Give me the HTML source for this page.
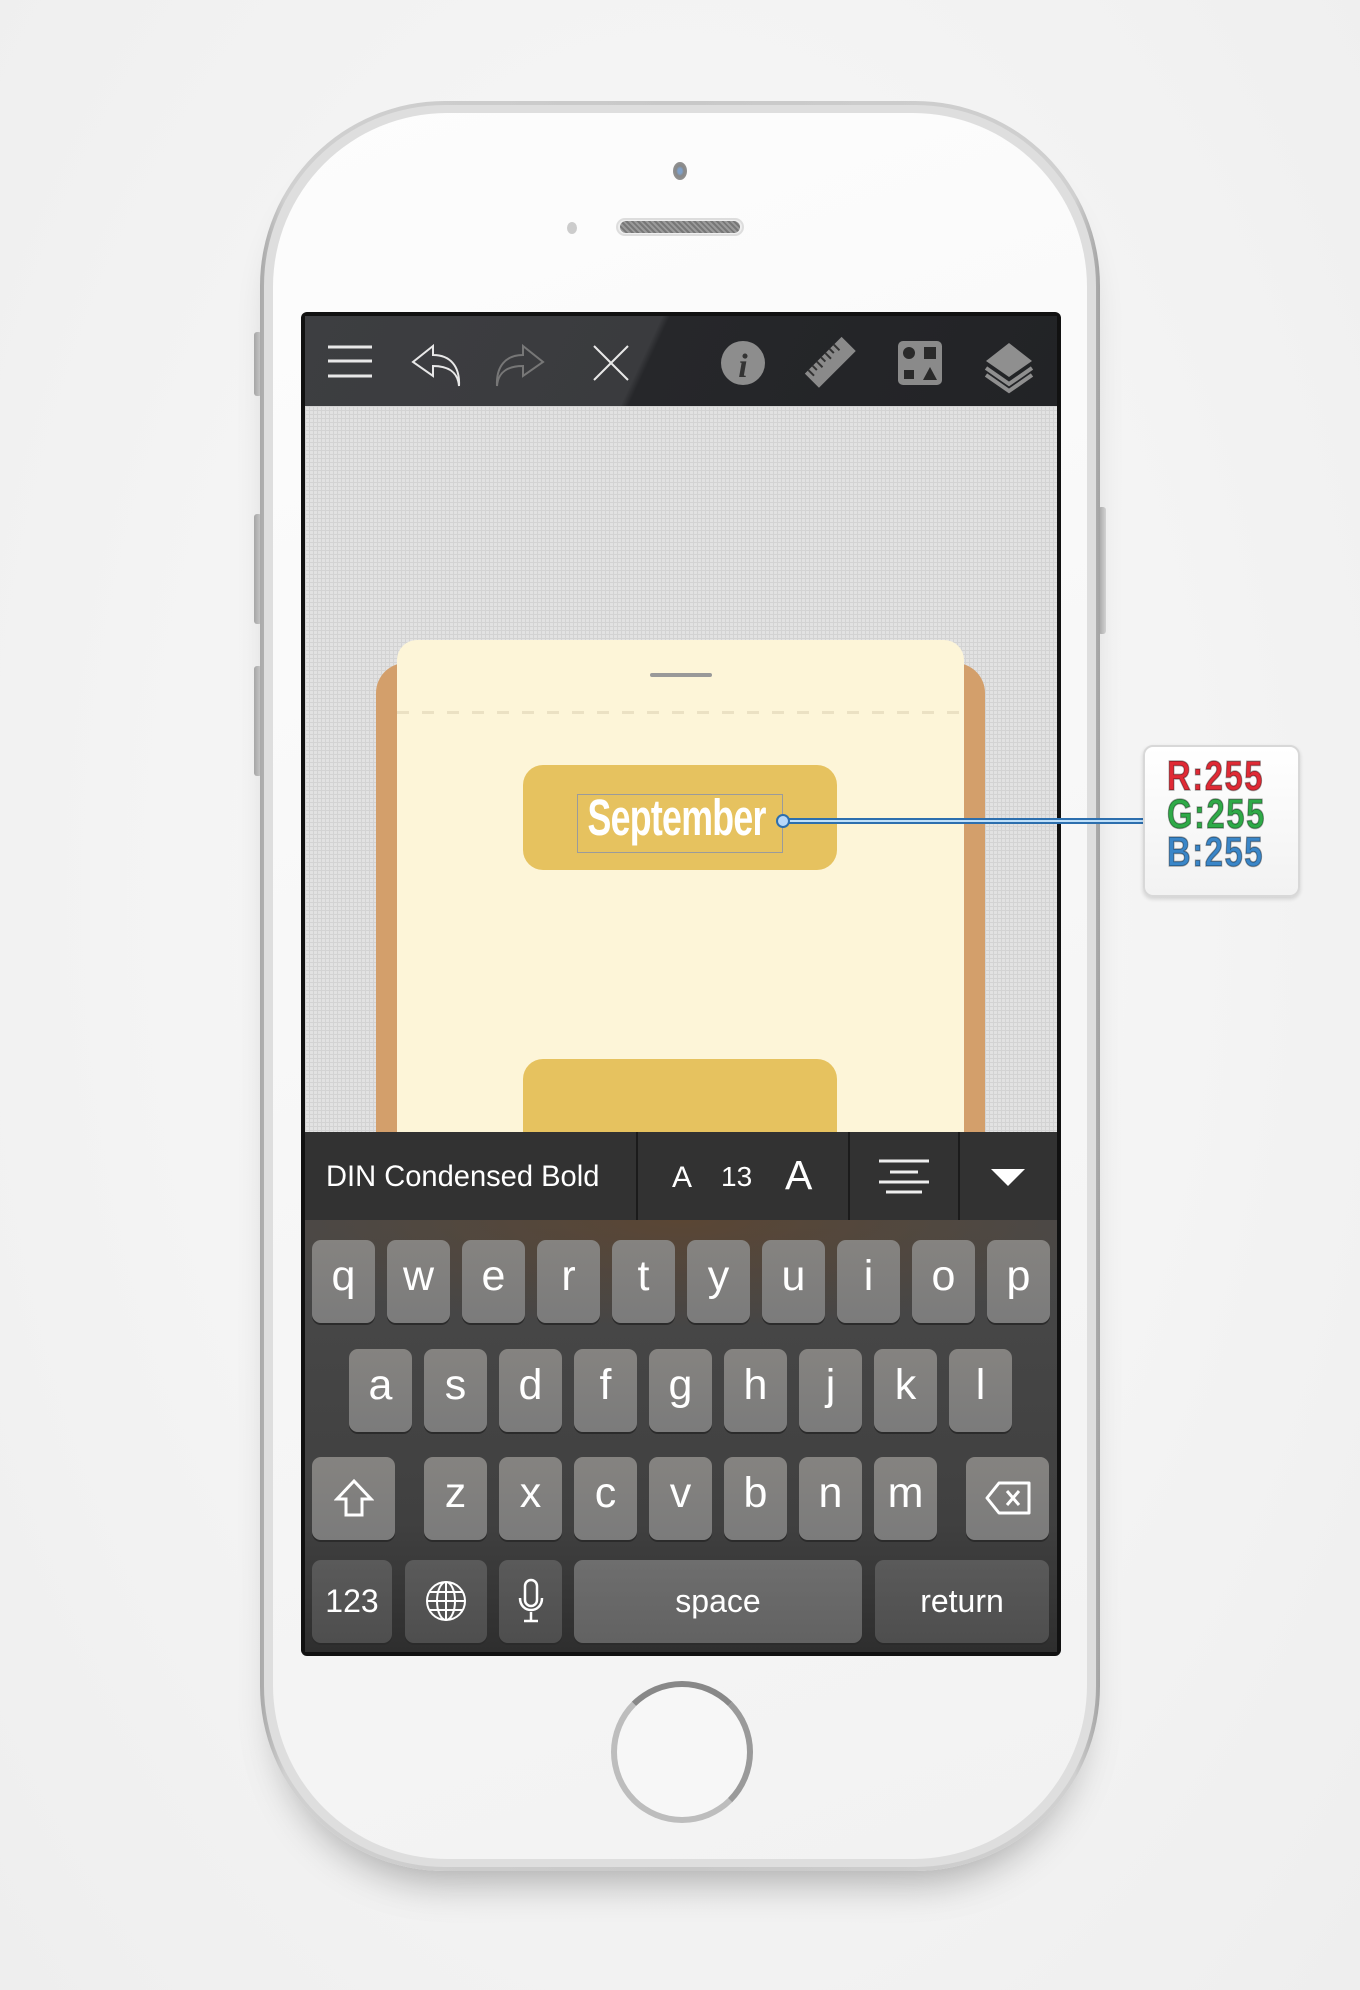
<!DOCTYPE html>
<html><head><meta charset="utf-8"><style>
*{margin:0;padding:0;box-sizing:border-box}
body{width:1360px;height:1990px;position:relative;overflow:hidden;font-family:"Liberation Sans",sans-serif;background:radial-gradient(ellipse at 50% 45%,#fafafa 0%,#f3f3f3 60%,#eeeeee 100%)}
.a{position:absolute}
.phone{left:260px;top:101px;width:840px;height:1770px;border-radius:185px;background:linear-gradient(90deg,#a9a9a9,#d0d0d0 3%,#c8c8c8 50%,#d0d0d0 97%,#a4a4a4);box-shadow:0 30px 40px -20px rgba(0,0,0,.3)}
.rim{left:264px;top:105px;width:832px;height:1762px;border-radius:181px;background:#dedede}
.face{left:273px;top:113px;width:814px;height:1746px;border-radius:174px;background:linear-gradient(160deg,#fdfdfd,#f6f6f6 60%,#f2f2f2)}
.btn{background:linear-gradient(90deg,#aaa,#d8d8d8);border-radius:3px}
.screen{left:301px;top:312px;width:760px;height:1344px;background:#111;border-radius:6px}
.tool{left:305px;top:316px;width:752px;height:90px;background:linear-gradient(115deg,#3d3e41 0%,#3a3b3e 45%,#26272a 46%,#222326 100%)}
.grid{left:305px;top:406px;width:752px;height:726px;background-color:#e2e2e2;background-image:linear-gradient(#d3d3d3 1px,transparent 1px),linear-gradient(90deg,#d3d3d3 1px,transparent 1px);background-size:4px 4px;overflow:hidden}
.key{position:absolute;height:83px;width:63px;border-radius:9px;background:linear-gradient(#858380,#7b7b7b);box-shadow:0 2px 0 #2b2b2b;color:#fff;font-size:43px;text-align:center;line-height:72px}
.k4{background:linear-gradient(#5a5a5a,#4e4e4e);font-size:32px;line-height:83px}
.rgb div{-webkit-text-stroke:1.5px rgba(0,0,0,.35)}
</style></head><body>
<div class="a btn" style="left:254px;top:332px;width:8px;height:64px"></div>
<div class="a btn" style="left:254px;top:514px;width:8px;height:110px"></div>
<div class="a btn" style="left:254px;top:666px;width:8px;height:110px"></div>
<div class="a btn" style="left:1098px;top:507px;width:8px;height:127px"></div>
<div class="a phone"></div>
<div class="a rim"></div>
<div class="a face"></div>
<div class="a" style="left:673px;top:162px;width:14px;height:18px;border-radius:50%;background:radial-gradient(#7fa0c8 20%,#888 40%,#999)"></div>
<div class="a" style="left:567px;top:222px;width:10px;height:12px;border-radius:50%;background:#ccc"></div>
<div class="a" style="left:616px;top:218px;width:128px;height:18px;border-radius:9px;background:#eee;border:2px solid #ddd"></div>
<div class="a" style="left:620px;top:221px;width:120px;height:12px;border-radius:6px;background:repeating-linear-gradient(45deg,#777 0 2px,#9a9a9a 2px 4px)"></div>
<div class="a" style="left:611px;top:1681px;width:142px;height:142px;border-radius:50%;border:6px solid #bdbdbd;border-top-color:#888;border-right-color:#9a9a9a;background:#f7f7f7"></div>

<div class="a screen"></div>
<div class="a tool"></div>
<svg class="a" style="left:305px;top:316px" width="752" height="90" viewBox="305 316 752 90">
<g stroke="#e8e8e8" stroke-width="3" fill="none">
<line x1="328" y1="347" x2="372" y2="347"/><line x1="328" y1="361" x2="372" y2="361"/><line x1="328" y1="376" x2="372" y2="376"/>
<path d="M433 346 L413 362 L433 376 L433 366 C448 366 458 372 459 386 C460 366 450 355 433 355 Z" stroke-width="2"/>
<path d="M523 346 L543 362 L523 376 L523 366 C508 366 498 372 497 386 C496 366 506 355 523 355 Z" stroke="#777" stroke-width="2"/>
<line x1="594" y1="346" x2="628" y2="380" stroke-width="2"/><line x1="628" y1="346" x2="594" y2="380" stroke-width="2"/>
</g>
<circle cx="743" cy="363" r="22" fill="#8d8d8d"/>
<text x="743" y="377" font-family="Liberation Serif" font-style="italic" font-weight="bold" font-size="34" fill="#333" text-anchor="middle">i</text>
<g transform="rotate(-45 831 363)"><rect x="805" y="352" width="52" height="20" fill="#8a8a8a"/><path d="M810 352v8M816 352v6M822 352v8M828 352v6M834 352v8M840 352v6M846 352v8" stroke="#333" stroke-width="2"/></g>
<rect x="898" y="341" width="44" height="44" rx="5" fill="#8a8a8a"/>
<circle cx="909" cy="353" r="6" fill="#2a2a2a"/><rect x="924" y="347" width="12" height="12" fill="#2a2a2a"/>
<path d="M904 370 L914 370 L914 379 L904 379 Z" fill="#2a2a2a"/><path d="M930 367 L937 380 L923 380 Z" fill="#2a2a2a"/>
<path d="M1009 343 L1032 361 L1009 377 L986 361 Z" fill="#8f8f8f"/>
<path d="M986 368 L1009 384 L1032 368" stroke="#8f8f8f" stroke-width="4" fill="none"/>
<path d="M986 375 L1009 391 L1032 375" stroke="#8f8f8f" stroke-width="4" fill="none"/>
</svg>

<div class="a grid">
<div class="a" style="left:71px;top:257px;width:609px;height:600px;border-radius:30px;background:#d39f6b"></div>
<div class="a" style="left:92px;top:234px;width:567px;height:600px;border-radius:20px;background:#fdf5d8"></div>
<div class="a" style="left:345px;top:267px;width:62px;height:4px;border-radius:2px;background:#999"></div>
<div class="a" style="left:92px;top:305px;width:567px;height:3px;background:repeating-linear-gradient(90deg,#ebe1c3 0 12px,transparent 12px 25px)"></div>
<div class="a" style="left:218px;top:359px;width:314px;height:105px;border-radius:20px;background:#e6c25f"></div>
<div class="a" style="left:272px;top:388px;width:206px;height:59px;border:1px solid #9b9b9b"></div>
<div class="a" style="left:245px;top:382px;width:250px;text-align:center;color:#fff;font-weight:bold;font-size:51px;transform:scaleX(.7);letter-spacing:-1px">September</div>
<div class="a" style="left:218px;top:653px;width:314px;height:120px;border-radius:20px;background:#e6c25f"></div>
</div>
<div class="a" style="left:782px;top:818px;width:362px;height:6px;background:#bfe0fa;border-top:2px solid #2d6fae;border-bottom:2px solid #2d6fae"></div>
<div class="a" style="left:776px;top:814px;width:14px;height:14px;border-radius:50%;background:#b8d8f8;border:2px solid #2d6fae"></div>
<div class="a" style="left:1143px;top:745px;width:157px;height:152px;border-radius:10px;background:linear-gradient(#fff,#f2f2f2);border:2px solid #d8d8d8;box-shadow:0 2px 4px rgba(0,0,0,.15)"></div>
<div class="a rgb" style="left:1167px;top:757px;font-weight:bold;font-size:42px;line-height:38px;transform:scaleX(.78);transform-origin:left;letter-spacing:2px">
<div style="color:#e02a35">R:255</div><div style="color:#2faa48">G:255</div><div style="color:#3a86c8">B:255</div></div>

<div class="a" style="left:305px;top:1132px;width:752px;height:88px;background:#323232"></div>
<div class="a" style="left:636px;top:1132px;width:2px;height:88px;background:#1b1b1b"></div>
<div class="a" style="left:848px;top:1132px;width:2px;height:88px;background:#1b1b1b"></div>
<div class="a" style="left:958px;top:1132px;width:2px;height:88px;background:#1b1b1b"></div>
<div class="a" style="left:326px;top:1160px;color:#fff;font-size:30px;transform:scaleX(.97);transform-origin:left">DIN Condensed Bold</div>
<div class="a" style="left:672px;top:1161px;color:#fff;font-size:30px">A</div>
<div class="a" style="left:721px;top:1161px;color:#fff;font-size:28px">13</div>
<div class="a" style="left:785px;top:1152px;color:#fff;font-size:41px">A</div>
<svg class="a" style="left:878px;top:1158px" width="52" height="40"><g stroke="#eee" stroke-width="3"><line x1="1" y1="3" x2="51" y2="3"/><line x1="12" y1="14" x2="40" y2="14"/><line x1="1" y1="24" x2="51" y2="24"/><line x1="8" y1="34" x2="44" y2="34"/></g></svg>
<svg class="a" style="left:990px;top:1168px" width="36" height="20"><path d="M1 1 L35 1 L18 18 Z" fill="#fff"/></svg>

<div class="a" style="left:305px;top:1220px;width:752px;height:432px;background:radial-gradient(ellipse 60% 25% at 50% 0%,#5a4634,transparent),linear-gradient(#494949,#404040 70%,#2e2e2e)"></div>
<div class="a" style="left:0;top:0">
<div class="key" style="left:312px;top:1240px">q</div><div class="key" style="left:387px;top:1240px">w</div><div class="key" style="left:462px;top:1240px">e</div><div class="key" style="left:537px;top:1240px">r</div><div class="key" style="left:612px;top:1240px">t</div><div class="key" style="left:687px;top:1240px">y</div><div class="key" style="left:762px;top:1240px">u</div><div class="key" style="left:837px;top:1240px">i</div><div class="key" style="left:912px;top:1240px">o</div><div class="key" style="left:987px;top:1240px">p</div>
<div class="key" style="left:349px;top:1349px">a</div><div class="key" style="left:424px;top:1349px">s</div><div class="key" style="left:499px;top:1349px">d</div><div class="key" style="left:574px;top:1349px">f</div><div class="key" style="left:649px;top:1349px">g</div><div class="key" style="left:724px;top:1349px">h</div><div class="key" style="left:799px;top:1349px">j</div><div class="key" style="left:874px;top:1349px">k</div><div class="key" style="left:949px;top:1349px">l</div>
<div class="key" style="left:312px;top:1457px;width:83px"><svg width="40" height="40" style="margin-top:21px"><path d="M20 3 L37 21 L28 21 L28 37 L12 37 L12 21 L3 21 Z" fill="none" stroke="#fff" stroke-width="3"/></svg></div>
<div class="key" style="left:424px;top:1457px">z</div><div class="key" style="left:499px;top:1457px">x</div><div class="key" style="left:574px;top:1457px">c</div><div class="key" style="left:649px;top:1457px">v</div><div class="key" style="left:724px;top:1457px">b</div><div class="key" style="left:799px;top:1457px">n</div><div class="key" style="left:874px;top:1457px">m</div>
<div class="key" style="left:966px;top:1457px;width:83px"><svg width="46" height="34" style="margin-top:24px"><path d="M14 2 L44 2 L44 32 L14 32 L2 17 Z" fill="none" stroke="#fff" stroke-width="3" stroke-linejoin="round"/><path d="M22 10 L34 24 M34 10 L22 24" stroke="#fff" stroke-width="3"/></svg></div>
<div class="key k4" style="left:312px;top:1560px;width:80px">123</div>
<div class="key k4" style="left:405px;top:1560px;width:82px"><svg width="42" height="42" style="margin-top:20px"><g fill="none" stroke="#fff" stroke-width="2"><circle cx="21" cy="21" r="19"/><ellipse cx="21" cy="21" rx="9" ry="19"/><line x1="21" y1="2" x2="21" y2="40"/><line x1="2" y1="21" x2="40" y2="21"/><path d="M5 12 H37 M5 30 H37"/></g></svg></div>
<div class="key k4" style="left:499px;top:1560px;width:63px"><svg width="30" height="46" style="margin-top:18px"><rect x="9" y="2" width="12" height="26" rx="6" fill="none" stroke="#fff" stroke-width="2.5"/><path d="M4 20 C4 36 26 36 26 20 M15 34 V42 M8 43 H22" fill="none" stroke="#fff" stroke-width="2.5"/></svg></div>
<div class="key k4" style="left:574px;top:1560px;width:288px;background:linear-gradient(#6e6e6e,#626262)">space</div>
<div class="key k4" style="left:875px;top:1560px;width:174px">return</div>
</div>
</body></html>
